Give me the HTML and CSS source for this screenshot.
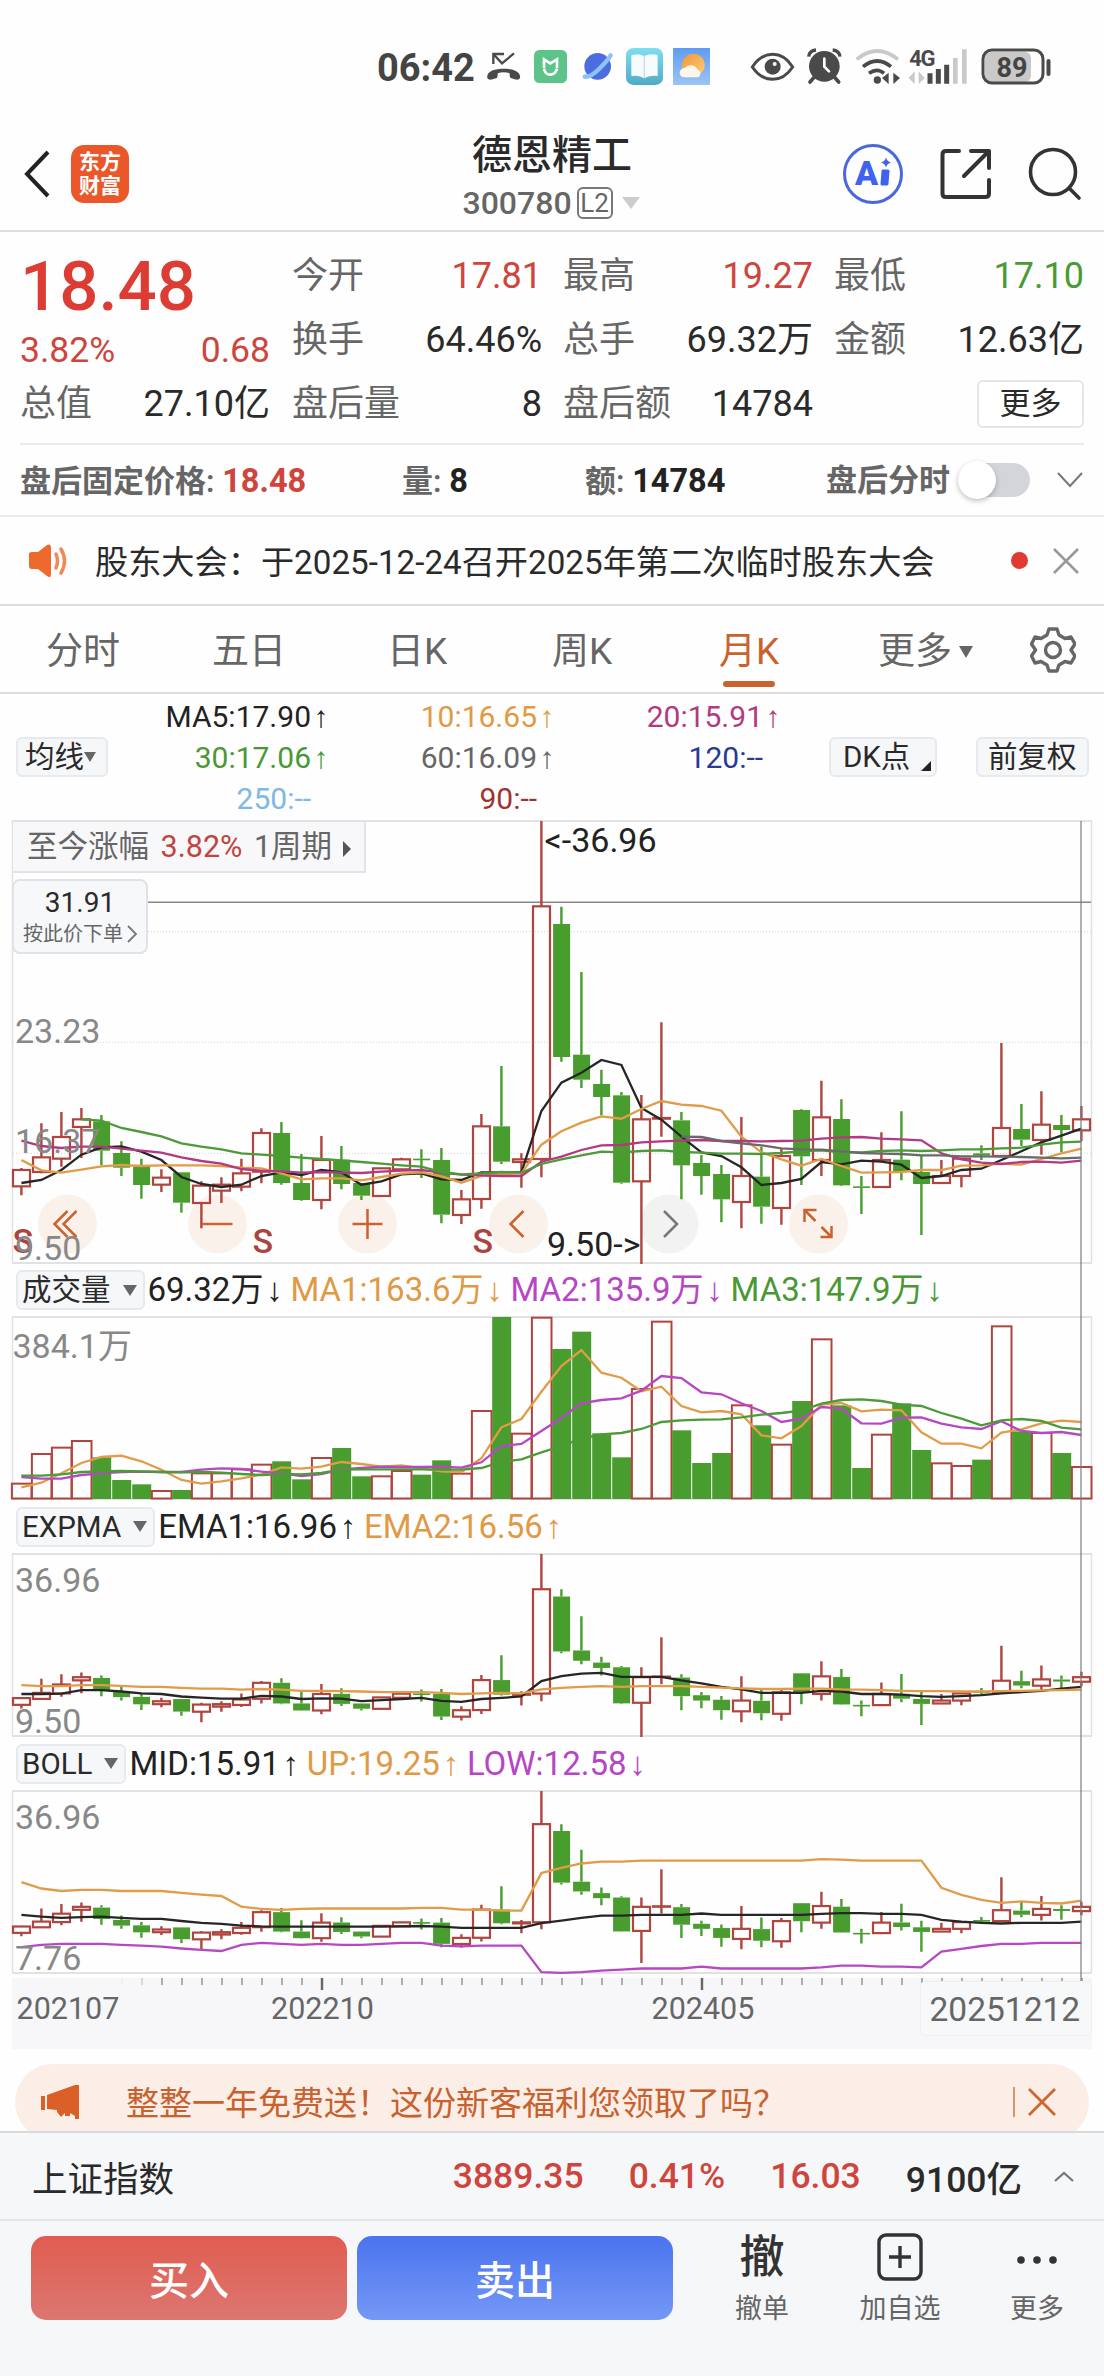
FILE: index.html
```html
<!DOCTYPE html>
<html lang="zh-CN">
<head>
  <meta charset="UTF-8">
  <meta name="viewport" content="width=device-width, initial-scale=1.0">
  <title>德恩精工 300780</title>
  <link rel="stylesheet" href="styles.css">
</head>
<body>
  <!-- 状态栏 -->
  <div class="status-bar">
    <span class="clock">06:42</span>
    <svg class="notify-icons" width="234" height="60" viewBox="0 0 702 180">
      <defs>
        <linearGradient id="book" x1="0" y1="0" x2="0" y2="1"><stop offset="0" stop-color="#7fdff0"/><stop offset="1" stop-color="#4fabc4"/></linearGradient>
        <linearGradient id="sky" x1="0" y1="0" x2="0" y2="1"><stop offset="0" stop-color="#5f9cf0"/><stop offset="1" stop-color="#9cc4f6"/></linearGradient>
        <linearGradient id="sun" x1="0" y1="0" x2="1" y2="1"><stop offset="0" stop-color="#f0963c"/><stop offset="1" stop-color="#fbcf72"/></linearGradient>
      </defs>
      <path d="M40 84V54H72M42 56L66 82L102 52" fill="none" stroke="#4a4a4a" stroke-width="7"/>
      <path d="M22 126C18 106 44 98 71 98S124 106 120 126Q116 134 104 130L92 126Q88 122 89 112Q71 106 53 112Q54 122 50 126L38 130Q26 134 22 126Z" fill="#4a4a4a"/>
      <rect x="162" y="42" width="99" height="99" rx="16" fill="#5cc389"/>
      <path d="M192 96V70L211 82L231 70V96M192 98Q196 116 211 116T231 98" fill="none" stroke="#fff" stroke-width="8"/>
      <circle cx="353" cy="91" r="40" fill="#4b6de0"/>
      <path d="M314 122Q332 124 358 98T392 58" fill="none" stroke="#8fc3f8" stroke-width="13" stroke-linecap="round"/>
      <rect x="438" y="36" width="111" height="111" rx="22" fill="url(#book)"/>
      <path d="M454 58Q476 50 493 60Q510 50 533 58V120Q508 116 493 127Q478 116 454 120Z" fill="#f6fbfd"/>
      <path d="M493 60V127" stroke="#c4dde8" stroke-width="4"/>
      <rect x="579" y="36" width="111" height="111" fill="url(#sky)"/>
      <circle cx="640" cy="87" r="34" fill="url(#sun)"/>
      <path d="M612 124a14 14 0 0 1 2-28a22 20 0 0 1 38 4a13 13 0 0 1 2 24z" fill="#fdf6ea"/>
    </svg>
    <svg class="system-icons" width="225" height="60" viewBox="804 0 675 180">
      <path d="M817 93Q842 55 878 55T938 93Q914 130 878 130T817 93Z" fill="none" stroke="#4a4a4a" stroke-width="9"/>
      <circle cx="878" cy="92" r="24" fill="#4a4a4a"/><circle cx="884" cy="84" r="6" fill="#fff"/>
      <circle cx="1033" cy="91" r="46" fill="#4a4a4a"/>
      <path d="M986 62Q988 44 1008 42M1080 62Q1078 44 1058 42" fill="none" stroke="#4a4a4a" stroke-width="10"/>
      <path d="M1002 124L990 138M1064 124L1076 138" stroke="#4a4a4a" stroke-width="11" stroke-linecap="round"/>
      <path d="M1033 68V92L1047 106" fill="none" stroke="#fff" stroke-width="8" stroke-linecap="round"/>
      <path d="M1130 70Q1192 20 1254 70" fill="none" stroke="#c9c9c9" stroke-width="11"/>
      <path d="M1149 92Q1192 58 1233 92M1167 112Q1192 94 1212 112" fill="none" stroke="#4a4a4a" stroke-width="11"/>
      <circle cx="1192" cy="132" r="11" fill="#4a4a4a"/>
      <path d="M1226 110V144L1206 126ZM1240 110V144L1260 126Z" fill="#4a4a4a"/>
      <text x="1288" y="89" class="net-type">4G</text>
      <path d="M1304 106V144L1286 126ZM1316 106V144L1334 126Z" fill="#c9c9c9"/>
      <path d="M1350 112V143M1375 99V143M1400 86V143" stroke="#4a4a4a" stroke-width="15"/>
      <path d="M1426 66V143M1453 40V143" stroke="#c9c9c9" stroke-width="14"/>
    </svg>
    <svg class="battery" width="72" height="38" viewBox="0 0 72 38">
      <rect x="4" y="4" width="46" height="30" rx="6" fill="#c9c9c9"/>
      <rect x="2" y="2" width="60" height="33" rx="9" fill="none" stroke="#4a4a4a" stroke-width="3"/>
      <path d="M67.5 13V26" stroke="#4a4a4a" stroke-width="4" stroke-linecap="round"/>
      <text x="31" y="28.5" text-anchor="middle" class="battery-num">89</text>
    </svg>
  </div>

  <!-- 标题栏 -->
  <header class="header">
    <svg class="back" width="30" height="50" viewBox="0 0 30 50"><path d="M26 3L5 25L26 47" fill="none" stroke="#222" stroke-width="4"/></svg>
    <div class="logo">东方<br>财富</div>
    <div class="title">
      <h1>德恩精工</h1>
      <div class="code">300780<span class="level">L2</span><i class="tri tri-light"></i></div>
    </div>
    <div class="tools">
      <svg width="62" height="62" viewBox="0 0 62 62">
        <circle cx="31" cy="31" r="28.5" fill="none" stroke="#4a68dc" stroke-width="3"/>
        <text x="13" y="42" class="ai">A</text>
        <path d="M41 28H46L45 41H40Z" fill="#3f63f0" stroke="#3f63f0" stroke-width="3" stroke-linejoin="round"/>
        <path d="M44 14.500Q45 18.500 49 19.500Q45 20.500 44 24.500Q43 20.500 39 19.500Q43 18.500 44 14.500Z" fill="#3f63f0"/>
      </svg>
      <svg width="52" height="52" viewBox="0 0 52 52" fill="none" stroke="#333" stroke-width="4" stroke-linecap="round" stroke-linejoin="round">
        <path d="M19 3H6Q2.500 3 2.500 6.500V45.500Q2.500 49 6 49H45Q49 49 49 45.500V32M31 3H49V20M49 3L24 28"/>
      </svg>
      <svg width="54" height="54" viewBox="0 0 54 54" fill="none" stroke="#333" stroke-width="3.600" stroke-linecap="round">
        <circle cx="25" cy="25" r="22.500"/><path d="M41 41L51 51"/>
      </svg>
    </div>
  </header>

  <!-- 行情 -->
  <section class="quote">
    <div class="quote-main">
      <div class="price">18.48</div>
      <div class="change"><span>3.82%</span><span>0.68</span></div>
      <div class="cell"><label>总值</label><span>27.10亿</span></div>
    </div>
    <div class="quote-grid">
      <div class="cell"><label>今开</label><span class="red">17.81</span></div>
      <div class="cell"><label>最高</label><span class="red">19.27</span></div>
      <div class="cell"><label>最低</label><span class="green">17.10</span></div>
      <div class="cell"><label>换手</label><span>64.46%</span></div>
      <div class="cell"><label>总手</label><span>69.32万</span></div>
      <div class="cell"><label>金额</label><span>12.63亿</span></div>
      <div class="cell"><label>盘后量</label><span>8</span></div>
      <div class="cell"><label>盘后额</label><span>14784</span></div>
      <div class="cell cell-end"><button class="more">更多</button></div>
    </div>
  </section>

  <section class="after">
    <div class="after-price">盘后固定价格: <b class="red">18.48</b></div>
    <div class="after-vol">量: <b>8</b></div>
    <div class="after-amt">额: <b>14784</b></div>
    <div class="after-switch">盘后分时<span class="toggle"></span>
      <svg width="26" height="18" viewBox="0 0 26 18"><path d="M1 2L13 15L25 2" fill="none" stroke="#777" stroke-width="2"/></svg>
    </div>
  </section>

  <section class="news">
    <svg class="horn" width="40" height="34" viewBox="0 0 40 34">
      <path d="M1 10Q1 8 4 8H10L19 1Q23 -1 23 4V30Q23 35 19 32L10 25H4Q1 25 1 22Z" fill="#ee6a2c"/>
      <path d="M28 10Q31 17 28 24M33 5Q40 17 33 29" fill="none" stroke="#ee8a58" stroke-width="3.500" stroke-linecap="round"/>
    </svg>
    <span class="news-text">股东大会：于2025-12-24召开2025年第二次临时股东大会</span>
    <i class="dot"></i>
    <svg width="26" height="26" viewBox="0 0 26 26"><path d="M1 1L25 25M25 1L1 25" stroke="#999" stroke-width="2.600"/></svg>
  </section>

  <nav class="tabs">
    <a>分时</a><a>五日</a><a>日K</a><a>周K</a><a class="active">月K</a><a class="tab-more">更多<i class="tri tri-sm"></i></a>
    <svg class="gear" width="46" height="46" viewBox="0 0 46 46" fill="none" stroke="#666" stroke-width="3.400" stroke-linejoin="round">
      <path d="M19 2H27L29 8L35 11.500L41 10L45 17L41 23L45 29L41 36L35 34.500L29 38L27 44H19L17 38L11 34.500L5 36L1.500 29L5.500 23L1.500 17L5 10L11 11.500L17 8Z"/>
      <circle cx="23" cy="23" r="7.500"/>
    </svg>
  </nav>

  <!-- K线图 -->
  <main class="chart">
    <div class="ma-legend">
      <button class="chip">均线<i class="tri tri-sm"></i></button>
      <div class="ma-grid">
        <span class="c-black">MA5:17.90<i class="arr">↑</i></span>
        <span class="c-orange">10:16.65<i class="arr">↑</i></span>
        <span class="c-pink">20:15.91<i class="arr">↑</i></span>
        <span class="c-green">30:17.06<i class="arr">↑</i></span>
        <span class="c-gray">60:16.09<i class="arr">↑</i></span>
        <span class="c-navy">120:--<i class="arr"></i></span>
        <span class="c-sky">250:--<i class="arr"></i></span>
        <span class="c-dark">90:--<i class="arr"></i></span>
      </div>
      <button class="chip chip-dk">DK点<i class="corner"></i></button>
      <button class="chip chip-fq">前复权</button>
    </div>

    <div class="panel">
      <svg id="kline" width="1104" height="444"></svg>
      <div class="since">至今涨幅 <b>3.82%</b> 1周期<i></i></div>
      <div class="order">
        <strong>31.91</strong>
        <span>按此价下单<svg width="10" height="20" viewBox="0 0 10 20"><path d="M1 2L9 10L1 18" fill="none" stroke="#777" stroke-width="1.800"/></svg></span>
      </div>
    </div>

    <div class="legend legend-vol">
      <button class="chip">成交量<i class="tri"></i></button>
      <span class="c-black">69.32万<i class="arr">↓</i></span>
      <span class="c-orange">MA1:163.6万<i class="arr">↓</i></span>
      <span class="c-purple">MA2:135.9万<i class="arr">↓</i></span>
      <span class="c-green">MA3:147.9万<i class="arr">↓</i></span>
    </div>
    <svg id="volume" width="1104" height="184"></svg>

    <div class="legend">
      <button class="chip">EXPMA<i class="tri"></i></button>
      <span class="c-black">EMA1:16.96<i class="arr">↑</i></span>
      <span class="c-orange">EMA2:16.56<i class="arr">↑</i></span>
    </div>
    <svg id="expma" width="1104" height="184"></svg>

    <div class="legend">
      <button class="chip">BOLL<i class="tri"></i></button>
      <span class="c-black">MID:15.91<i class="arr">↑</i></span>
      <span class="c-orange">UP:19.25<i class="arr">↑</i></span>
      <span class="c-purple">LOW:12.58<i class="arr">↓</i></span>
    </div>
    <svg id="boll" width="1104" height="184"></svg>

    <svg id="axis" width="1104" height="75"></svg>
    <div class="cursor"></div>
  </main>

  <div class="promo-wrap">
    <div class="promo">
      <svg width="40" height="34" viewBox="0 0 40 34" fill="#da6028"><path d="M0 11H4V25H0ZM6 10L34 0H38V34H34V31L29 28V31H24V28L20 32L16 27V25L6 24Z"/></svg>
      <span class="promo-text">整整一年免费送！这份新客福利您领取了吗？</span>
      <i class="bar"></i>
      <svg width="28" height="28" viewBox="0 0 28 28"><path d="M1 1L27 27M27 1L1 27" stroke="#d0652f" stroke-width="2.800"/></svg>
    </div>
  </div>

  <div class="index-bar">
    <span class="index-name">上证指数</span>
    <b class="red">3889.35</b><b class="red">0.41%</b><b class="red">16.03</b><b>9100亿</b>
    <svg width="20" height="11" viewBox="0 0 20 11"><path d="M1 10L10 2L19 10" fill="none" stroke="#777" stroke-width="2.200"/></svg>
  </div>

  <footer class="actions">
    <button class="buy">买入</button>
    <button class="sell">卖出</button>
    <div class="act act-cancel"><span class="glyph">撤</span>撤单</div>
    <div class="act act-add">
      <svg width="46" height="48" viewBox="0 0 46 48" fill="none" stroke="#333" stroke-width="3.400"><rect x="2" y="2" width="42" height="44" rx="7"/><path d="M12 24H34M23 13V35"/></svg>加自选
    </div>
    <div class="act act-more">
      <svg width="46" height="48" viewBox="0 0 46 48" fill="#333"><circle cx="7" cy="27" r="3.800"/><circle cx="23" cy="27" r="3.800"/><circle cx="39" cy="27" r="3.800"/></svg>更多
    </div>
  </footer>

  <script src="chart.js"></script>
</body>
</html>
```

FILE: styles.css
```css
* {
  box-sizing: border-box;
}
body {
  margin: 0;
  width: 1104px;
  height: 2376px;
  overflow: hidden;
  background: #fefefe;
  color: #2a2a2a;
  font-family: Roboto, "Noto Sans CJK SC", sans-serif;
}
svg {
  display: block;
  flex: none;
}
button {
  font-family: inherit;
  color: inherit;
  padding: 0;
  white-space: nowrap;
}
i {
  font-style: normal;
}
.red { color: #cf453d; }
.green { color: #4a9a35; }
.c-black { color: #222; }
.c-orange { color: #e09a45; }
.c-pink { color: #b13a80; }
.c-green { color: #4a9835; }
.c-gray { color: #666; }
.c-navy { color: #283a94; }
.c-sky { color: #80b8e4; }
.c-dark { color: #9c3430; }
.c-purple { color: #b746c6; }

/* 小三角 */
.tri {
  display: inline-block;
  border: 7px solid transparent;
  border-top: 11px solid #666;
  border-bottom: 0;
}
.tri-sm {
  border-width: 10px 6px 0;
}
.tri-light {
  border-width: 12px 9px 0;
  border-top-color: #ccc;
}
.arr {
  display: inline-block;
  width: 20px;
  font-family: "Liberation Sans", sans-serif;
  font-size: 30px;
  text-align: center;
}

/* 状态栏 */
.status-bar {
  display: flex;
  align-items: flex-start;
  height: 112px;
  padding: 36px 0 0 377px;
}
.clock {
  width: 103px;
  font-size: 38px;
  font-weight: 700;
  line-height: 64px;
  color: #444;
}
.system-icons {
  margin-left: 34px;
}
.net-type {
  font-size: 66px;
  font-weight: 700;
  letter-spacing: -4px;
  fill: #4a4a4a;
}
.battery {
  margin: 12px 0 0 8px;
}
.battery-num {
  font-size: 27px;
  font-weight: 700;
  fill: #444;
}

/* 标题栏 */
.header {
  position: relative;
  display: flex;
  align-items: center;
  height: 120px;
  padding: 5px 22px 0 22px;
  border-bottom: 2px solid #ddd;
}
.logo {
  width: 58px;
  height: 58px;
  margin-left: 19px;
  padding-top: 5px;
  border-radius: 13px;
  background: #e9572b;
  color: #fff;
  font-size: 21px;
  font-weight: 700;
  line-height: 24px;
  text-align: center;
}
.title {
  position: absolute;
  left: 0;
  right: 0;
  top: 17px;
  text-align: center;
}
.title h1 {
  margin: 0;
  font-size: 40px;
  font-weight: 500;
  line-height: 54px;
}
.code {
  display: flex;
  align-items: center;
  justify-content: center;
  height: 40px;
  margin-left: -2px;
  font-size: 32px;
  font-weight: 500;
  color: #666;
}
.level {
  width: 36px;
  height: 32px;
  margin: 0 9px 0 5px;
  border: 2px solid #777;
  border-radius: 6px;
  font-size: 26px;
  font-weight: 400;
  line-height: 29px;
}
.tools {
  display: flex;
  align-items: center;
  gap: 36px;
  margin-left: auto;
}
.ai {
  font-size: 34px;
  font-weight: 900;
  fill: #3f63f0;
}

/* 行情 */
.quote {
  display: flex;
  height: 213px;
  margin: 0 20px;
  padding-top: 12px;
  border-bottom: 2px solid #ececec;
  font-size: 36px;
}
.quote-main {
  width: 250px;
  margin-right: 22px;
}
.price {
  height: 86px;
  font-size: 69px;
  font-weight: 500;
  line-height: 86px;
  color: #dc3c34;
}
.change {
  display: flex;
  justify-content: space-between;
  height: 42px;
  line-height: 40px;
  font-size: 35.5px;
  color: #cf453d;
}
.quote-grid {
  display: grid;
  grid-template-columns: repeat(3, 250px);
  grid-auto-rows: 64px;
  column-gap: 21px;
}
.cell {
  display: flex;
  justify-content: space-between;
  align-items: center;
  height: 64px;
  line-height: 64px;
}
.cell label {
  color: #666;
}
.cell-end {
  justify-content: flex-end;
}
.more {
  width: 107px;
  height: 48px;
  border: 2px solid #e6e6e6;
  border-radius: 6px;
  background: #fff;
  font-size: 31px;
  line-height: 42px;
}

.after {
  display: flex;
  height: 72px;
  padding-left: 20px;
  border-bottom: 2px solid #ececec;
  font-size: 31px;
  font-weight: 600;
  line-height: 73px;
  color: #666;
}
.after b {
  font-size: 32.5px;
  font-weight: 700;
  color: #222;
}
.after b.red {
  color: #cf453d;
}
.after-price { width: 382px; }
.after-vol { width: 183px; }
.after-amt { width: 241px; }
.after-switch {
  display: flex;
  align-items: center;
}
.toggle {
  width: 72px;
  height: 34px;
  margin: 0 27px 0 8px;
  border-radius: 17px;
  background: #d3d5db;
}
.toggle::before {
  content: "";
  display: block;
  width: 38px;
  height: 38px;
  margin-top: -2px;
  border-radius: 50%;
  background: #fff;
  box-shadow: 0 2px 5px rgba(0, 0, 0, 0.25);
}

/* 公告 */
.news {
  display: flex;
  align-items: center;
  height: 89px;
  padding: 0 25px 0 28px;
  border-bottom: 2px solid #ddd;
  font-size: 33.2px;
}
.news-text {
  margin: -2px 0 0 27px;
  white-space: nowrap;
}
.dot {
  width: 17px;
  height: 17px;
  margin: 0 25px 0 auto;
  border-radius: 50%;
  background: #e03a32;
}

/* 周期切换 */
.tabs {
  display: flex;
  align-items: center;
  height: 88px;
  padding: 5px 0 0 46px;
  border-bottom: 2px solid #ddd;
  font-size: 37px;
  color: #666;
}
.tabs a {
  position: relative;
  width: 166px;
  line-height: 80px;
}
.tabs a:nth-child(2) { width: 175px; }
.tabs a:nth-child(3) { width: 165px; }
.tabs a:nth-child(4) { width: 167px; }
.tabs a:nth-child(5) { width: 159px; }
.tabs .active {
  color: #c9622f;
}
.tabs .active::after {
  content: "";
  position: absolute;
  left: 4px;
  bottom: 5px;
  width: 52px;
  height: 6px;
  border-radius: 3px;
  background: #c9622f;
}
.tabs .tab-more {
  width: 152px;
}
.tab-more .tri {
  margin-left: 7px;
  border-width: 12px 7px 0;
  vertical-align: 6px;
}
.gear {
  margin-top: -4px;
}

/* 图表 */
.chart {
  position: relative;
}
.chart svg {
  overflow: visible;
}
.ma-legend {
  display: flex;
  align-items: center;
  height: 126px;
  padding-left: 16px;
  font-size: 30px;
}
.chip {
  display: flex;
  align-items: center;
  height: 40px;
  padding: 0 7px;
  border: 2px solid #e6e9ed;
  border-radius: 6px;
  background: #f6f7f9;
  font-size: 29.5px;
  line-height: 36px;
}
.ma-grid {
  display: grid;
  grid-template-columns: 223px 226px 226px;
  grid-auto-rows: 41px;
  line-height: 41px;
  text-align: right;
}
.ma-legend > .chip:first-child {
  width: 92px;
}
.ma-legend .chip-dk {
  position: relative;
  width: 108px;
  margin-left: 46px;
  padding-left: 12px;
}
.ma-legend .chip-fq {
  margin-left: 39px;
  width: 113px;
  padding-left: 10px;
}
.corner {
  position: absolute;
  right: 4px;
  bottom: 4px;
  border-left: 10px solid transparent;
  border-bottom: 10px solid #222;
}
.panel {
  position: relative;
}
.since {
  position: absolute;
  left: 12px;
  top: 2px;
  width: 354px;
  height: 51px;
  padding-left: 14px;
  border: solid #e2e3e6;
  border-width: 0 2px 2px 1px;
  background: #f8f8fa;
  font-size: 30.5px;
  line-height: 49px;
  color: #666;
  white-space: nowrap;
  word-spacing: 4px;
}
.since b {
  font-weight: 400;
  color: #c0453e;
}
.since i {
  display: inline-block;
  margin-left: 11px;
  border: 8px solid transparent;
  border-left-color: #555;
  border-right: 0;
}
.order {
  position: absolute;
  left: 12px;
  top: 59px;
  width: 136px;
  height: 75px;
  padding-top: 5px;
  border: 2px solid #dfe2e6;
  border-radius: 8px;
  background: #f7f8fa;
  text-align: center;
}
.order strong {
  display: block;
  font-size: 28px;
  font-weight: 400;
  line-height: 34px;
}
.order span {
  display: flex;
  align-items: center;
  justify-content: center;
  gap: 4px;
  font-size: 20px;
  line-height: 28px;
  color: #666;
}
.legend {
  display: flex;
  align-items: center;
  height: 53px;
  padding-left: 16px;
  font-size: 33px;
  line-height: 50px;
  white-space: nowrap;
}
.legend-vol {
  height: 52px;
}
.legend .chip {
  height: 40px;
  margin-right: 3px;
  padding: 0 6px 0 4px;
  font-size: 29.5px;
  line-height: 36px;
}
.legend .tri {
  margin-left: 12px;
}
.legend span {
  margin-right: 5px;
}
.legend .arr {
  width: 22px;
  font-size: 33px;
}
.cursor {
  position: absolute;
  left: 1080px;
  top: 127px;
  width: 2px;
  height: 1160px;
  background: rgba(120, 125, 130, 0.6);
}

/* 图内文字 */
.scale {
  font-size: 34px;
  fill: #888;
}
.mark {
  font-size: 34px;
  fill: #222;
}
.sell-mark {
  font-size: 34px;
  font-weight: 500;
  fill: #ab443e;
}
.date {
  font-size: 30.5px;
  fill: #666;
}
.date-now {
  font-size: 33.5px;
  fill: #666;
}

/* 推广条 */
.promo-wrap {
  height: 82px;
  padding: 15px 15px 0;
  overflow: hidden;
}
.promo {
  display: flex;
  align-items: center;
  height: 76px;
  padding: 0 33px 0 26px;
  border-radius: 38px;
  background: #fbeee6;
  color: #c8612e;
  font-size: 33px;
  white-space: nowrap;
}
.promo-text {
  margin: -2px 0 0 45px;
}
.bar {
  width: 2px;
  height: 30px;
  margin: 0 13px 0 auto;
  background: #dc946c;
}

.index-bar {
  display: flex;
  align-items: center;
  height: 90px;
  padding: 0 30px 0 32px;
  border-top: 2px solid #d8dadc;
  border-bottom: 2px solid #e4e6e9;
  background: #f6f7f9;
  font-size: 35.5px;
}
.index-bar b {
  margin-right: 45px;
  font-weight: 500;
}
.index-bar b:nth-of-type(4) {
  margin-right: 32px;
}
.index-name {
  margin-right: auto;
}

/* 底部按钮 */
.actions {
  display: flex;
  height: 155px;
  padding: 15px 0 0 31px;
  background: #f6f7f9;
}
.actions button {
  width: 316px;
  height: 84px;
  margin-right: 10px;
  border: 0;
  border-radius: 15px;
  color: #fff;
  font-size: 40px;
  font-weight: 500;
}
.buy {
  background: linear-gradient(#e05c50, #dc7770);
}
.sell {
  background: linear-gradient(#4a74ee, #7598f6);
}
.act {
  display: flex;
  flex-direction: column;
  align-items: center;
  margin-top: -3px;
  font-size: 27px;
  line-height: 56px;
  color: #666;
  white-space: nowrap;
}
.glyph {
  height: 48px;
  font-size: 45px;
  font-weight: 500;
  line-height: 50px;
  color: #333;
}
.act-cancel {
  width: 80px;
  margin-left: 39px;
}
.act-add {
  width: 100px;
  margin-left: 48px;
}
.act-more {
  width: 80px;
  margin-left: 47px;
}
```

FILE: chart.js
```js
const RED = '#b0453f';
const GREEN = '#489d2e';
const ORANGE = '#e09c48';
const PINK = '#b33a82';
const PURPLE = '#b648c4';
const X0 = 21.4;
const STEP = 20;

// 类型, 最高, 实体上沿, 实体下沿, 最低
const candles = [
  ['r', 1074, 1080, 1129, 1156], ['r', 940, 1042, 1086, 1090], ['r', 906, 981, 1046, 1070],
  ['r', 894, 928, 951, 1044], ['g', 915, 934, 1022, 1066], ['g', 994, 1029, 1073, 1098],
  ['g', 1046, 1071, 1125, 1166], ['r', 1078, 1103, 1124, 1146], ['g', 1087, 1087, 1178, 1208],
  ['r', 1114, 1127, 1179, 1255], ['r', 1102, 1124, 1142, 1179], ['r', 1046, 1090, 1130, 1144],
  ['r', 955, 969, 1085, 1120], ['g', 936, 969, 1119, 1124], ['g', 1032, 1119, 1170, 1172],
  ['r', 978, 1050, 1170, 1198], ['g', 1008, 1049, 1122, 1138], ['g', 1119, 1119, 1157, 1170],
  ['r', 1075, 1075, 1158, 1158], ['r', 1043, 1048, 1078, 1080], ['g', 1018, 1046, 1048, 1104],
  ['g', 1014, 1050, 1214, 1240], ['r', 1140, 1168, 1215, 1242], ['r', 912, 949, 1167, 1196],
  ['g', 768, 949, 1055, 1062], ['r', 1030, 1048, 1056, 1133], ['r', 33, 289, 1047, 1102],
  ['g', 290, 342, 741, 755], ['g', 486, 734, 809, 834], ['g', 779, 822, 861, 916],
  ['g', 846, 856, 1118, 1121], ['r', 855, 928, 1114, 1362], ['r', 637, 924, 926, 980],
  ['g', 906, 931, 1066, 1168], ['g', 1035, 1059, 1098, 1154], ['g', 1065, 1092, 1168, 1237],
  ['r', 921, 1098, 1176, 1255], ['g', 1010, 1100, 1190, 1241], ['r', 1014, 1038, 1194, 1244],
  ['g', 898, 900, 1039, 1125], ['r', 812, 922, 1050, 1098], ['g', 868, 927, 1126, 1128],
  ['g', 1098, 1129, 1132, 1212], ['r', 967, 1050, 1131, 1133], ['g', 904, 1049, 1084, 1111],
  ['g', 1036, 1086, 1122, 1275], ['r', 1050, 1098, 1119, 1120], ['r', 1046, 1046, 1098, 1132],
  ['g', 1006, 1030, 1036, 1050], ['r', 699, 954, 1038, 1040], ['g', 882, 957, 989, 1008],
  ['r', 844, 944, 990, 1034], ['g', 915, 945, 960, 1027], ['r', 888, 928, 961, 993]
];

const ma5 = [1119,1110,1080,1034,1012,1009,1025,1050,1101,1122,1131,1124,1098,1087,1095,1080,1087,1124,1114,1093,1090,1108,1110,1087,1087,1087,903,818,788,750,765,894,929,980,1027,1038,1072,1125,1119,1107,1056,1063,1052,1055,1064,1104,1098,1080,1076,1050,1024,997,977,956];
const ma10 = [1050,1081,1088,1079,1069,1065,1068,1066,1066,1066,1068,1073,1075,1090,1108,1105,1105,1111,1101,1091,1087,1099,1118,1098,1092,1090,1004,964,938,919,926,897,873,884,888,902,980,1027,1048,1067,1047,1068,1088,1087,1086,1080,1080,1067,1066,1061,1064,1047,1030,1016];
const ma20 = [992,1008,1014,1010,1010,1016,1022,1028,1042,1053,1061,1077,1082,1084,1088,1086,1088,1089,1085,1082,1080,1088,1094,1096,1098,1098,1055,1040,1020,1006,1005,997,994,992,990,993,993,994,993,992,986,982,981,986,988,991,1030,1048,1058,1062,1056,1055,1058,1052];
const ma30 = [928,932,954,966,979,1000,1010,1018,1030,1034,1038,1043,1047,1051,1056,1061,1066,1070,1086,1093,1090,1086,1088,1062,1048,1036,1025,1027,1023,1021,1026,1028,1031,1031,1032,1029,1024,1021,1027,1027,1023,1021,1023,1021,1018,1018,1015,1013,1004,997,995];
const ma60 = [980,981,993,1000,1006,1015,1018,1019,1024,1029,1031,1032,1036,1036,1039,1039,1040,1041,1043,1045,1043];

const volumes = [671,582,563,543,592,660,673,693,690,640,640,628,614,604,658,594,564,649,649,633,644,601,641,453,171,521,173,267,215,520,592,387,185,511,609,579,436,496,554,423,238,436,624,524,430,570,610,618,599,199,514,519,579,621];
const vol1 = [682,668,640,609,591,587,604,629,660,671,664,655,644,622,626,620,606,612,620,616,625,634,636,595,502,477,395,318,270,338,353,394,380,438,457,453,463,526,535,498,434,429,454,449,451,517,551,551,565,518,508,490,482,486];
const vol2 = [651,656,656,645,640,636,635,636,636,629,625,627,635,640,648,642,628,624,620,621,621,620,623,607,558,552,513,474,430,420,415,392,348,354,397,403,430,453,486,476,441,446,490,491,473,472,491,502,507,484,513,519,516,525];
const vol3 = [647,647,643,636,634,633,634,636,637,636,638,642,645,642,643,639,629,628,628,628,628,629,629,624,606,598,577,558,536,523,519,507,486,481,479,478,472,464,459,452,431,420,418,423,434,438,459,476,496,481,477,483,503,508];

const ema1 = [543,543,542,532,532,536,541,543,550,553,556,556,548,550,557,555,556,563,560,557,554,562,565,557,554,550,507,493,486,484,495,495,495,505,513,523,530,540,540,540,534,536,543,543,545,549,551,549,546,541,538,534,528,523];
const ema2 = [518,521,521,518,518,520,523,523,526,528,528,531,529,531,534,534,535,536,538,538,538,540,543,541,540,541,530,526,523,521,523,521,521,521,523,525,527,529,529,528,528,530,531,532,534,535,535,536,536,535,534,533,532,531];

const mid = [1162,1167,1170,1168,1167,1170,1173,1173,1179,1184,1187,1192,1194,1195,1195,1195,1195,1195,1195,1194,1193,1195,1198,1198,1198,1198,1185,1178,1170,1164,1164,1162,1162,1162,1158,1162,1162,1162,1162,1162,1159,1157,1157,1159,1159,1162,1176,1181,1184,1186,1184,1184,1184,1181];
const up = [1070,1088,1095,1092,1092,1095,1095,1095,1100,1105,1109,1139,1145,1148,1145,1144,1144,1144,1144,1144,1142,1142,1147,1147,1150,1150,1045,1030,1018,1013,1013,1010,1010,1010,1010,1010,1010,1010,1010,1010,1006,1007,1010,1010,1010,1010,1086,1106,1120,1128,1124,1128,1130,1122];
const low = [1252,1246,1243,1243,1243,1246,1248,1251,1256,1260,1263,1246,1240,1243,1246,1243,1246,1246,1243,1240,1240,1248,1250,1248,1248,1248,1322,1324,1322,1318,1315,1312,1312,1312,1307,1312,1312,1312,1312,1312,1309,1304,1304,1307,1307,1309,1265,1257,1249,1243,1243,1240,1240,1240];

const xAt = i => X0 + i * STEP;

function frame(h) {
  return `<path d="M12.5 1V${h - 1}M1091.5 1V${h - 1}" stroke="#e2e2e2" stroke-width="1.5"/>
    <path d="M12 1H1092M12 ${h - 1}H1092" stroke="#e2e2e2" stroke-width="2"/>`;
}

function line(data, color, y, start = 0) {
  const pts = data.map((v, i) => `${xAt(i + start)},${y(v).toFixed(1)}`).join(' ');
  return `<polyline points="${pts}" fill="none" stroke="${color}" stroke-width="2.3"/>`;
}

function text(x, y, str, cls) {
  return `<text x="${x}" y="${y}" class="${cls}">${str}</text>`;
}

function drawCandles(y) {
  return candles.map(([type, hi, top, bottom, lo], i) => {
    const x = xAt(i);
    const color = type === 'r' ? RED : GREEN;
    const t = y(top), b = y(bottom);
    const wick = `<path d="M${x} ${y(hi)}V${t}M${x} ${b}V${y(lo)}" stroke="${color}" stroke-width="2.4"/>`;
    const body = type === 'r'
      ? `<rect x="${x - 8.4}" y="${t}" width="17" height="${Math.max(b - t, 0.4)}" fill="none" stroke="${color}" stroke-width="2.2"/>`
      : `<rect x="${x - 8.3}" y="${t}" width="17" height="${Math.max(b - t, 1.6)}" fill="${color}"/>`;
    return wick + body;
  }).join('');
}

function drawVolumes() {
  return volumes.map((v, i) => {
    const x = xAt(i), t = (v - 171) / 3 + 1;
    return candles[i][0] === 'r'
      ? `<rect x="${x - 9.5}" y="${t}" width="19.6" height="${182.5 - t}" fill="none" stroke="${RED}" stroke-width="2"/>`
      : `<rect x="${x - 9.2}" y="${t}" width="19" height="${183 - t}" fill="${GREEN}"/>`;
  }).join('');
}

function roundButtons() {
  const icons = [
    [67.5, 'M0 -13L-13 0L0 13M9 -13L-4 0L9 13'],
    [217.5, 'M-15 0H15'],
    [367.5, 'M-15 0H15M0 -15V15'],
    [518.5, 'M5 -13L-8 0L5 13'],
    [669, 'M-5 -13L8 0L-5 13'],
    [818.5, 'M-3 -3L-14 -14M-14 -2V-14H-2M3 3L13 13M13 2V13H2']
  ];
  return icons.map(([x, d], i) => `<g transform="translate(${x} 404)">
    <circle r="29.5" fill="${i === 4 ? '#f2f2f2' : '#fbf1eb'}"/>
    <path d="${d}" fill="none" stroke="${i === 4 ? '#777' : '#cc6230'}" stroke-width="2.5"/></g>`).join('');
}

// 主图
const yMain = v => (v - 33) / 3 + 1;
document.getElementById('kline').innerHTML = frame(444) +
  '<path d="M13 111.700H1091M13 222.300H1091M13 333.300H1091" stroke="#d4d4d4" stroke-dasharray="1 2"/>' +
  '<path d="M146 82.300H1091" stroke="#888" stroke-width="1.600"/>' +
  roundButtons() + drawCandles(yMain) +
  line(ma5, '#262626', yMain) + line(ma10, ORANGE, yMain) + line(ma20, PINK, yMain) +
  line(ma30, '#4c9a38', yMain, 3) + line(ma60, '#6a6a6a', yMain, 33) +
  text(12.500, 433, 'S', 'sell-mark') + text(252.500, 433, 'S', 'sell-mark') + text(472.500, 433, 'S', 'sell-mark') +
  text(15, 222.500, '23.23', 'scale') + text(15, 333, '16.37', 'scale') + text(15, 440, '9.50', 'scale') +
  text(544.500, 31.500, '&lt;-36.96', 'mark') + text(547, 436, '9.50-&gt;', 'mark');

// 成交量
const yVol = v => (v - 171) / 3 + 1;
document.getElementById('volume').innerHTML = frame(184) + drawVolumes() +
  line(vol1, ORANGE, yVol) + line(vol2, PURPLE, yVol) + line(vol3, '#4c9a38', yVol) +
  text(12.500, 42, '384.1万', 'scale');

// EXPMA
const yEma = v => (v - 151) / 2.8 + 1;
document.getElementById('expma').innerHTML = frame(184) +
  drawCandles(v => (v - 33) / 1326 * 182.5 + 1) +
  line(ema1, '#262626', yEma) + line(ema2, ORANGE, yEma) +
  text(15, 39, '36.96', 'scale') + text(15, 179.500, '9.50', 'scale');

// BOLL
const yBoll = v => (v - 815) / 2.8 + 1;
document.getElementById('boll').innerHTML = frame(184) +
  drawCandles(v => (v - 33) / 1326 * 27.46 / 29.2 * 182.5 + 1) +
  line(mid, '#262626', yBoll) + line(up, ORANGE, yBoll) + line(low, PURPLE, yBoll) +
  text(15, 38.500, '36.96', 'scale') + text(15, 179.500, '7.76', 'scale');

// 时间轴
let ticks = '';
for (let i = 5; i < 54; i++) {
  const major = i === 15 || i === 34;
  const fade = i === 5 ? 0.1 : i === 6 ? 0.4 : 1;
  ticks += `<path d="M${xAt(i) + 0.6} 4V${major ? 16 : 11}" stroke="${major ? '#666' : '#999'}" stroke-width="${major ? 2.4 : 1.6}" opacity="${fade}"/>`;
}
document.getElementById('axis').innerHTML =
  '<rect x="12" y="4" width="1080" height="71" fill="#f7f7fa"/>' + ticks +
  '<rect x="920.500" y="7.500" width="171" height="54" rx="5" fill="#f7f8fa" stroke="#eeeff2"/>' +
  text(16.500, 45, '202107', 'date') + text(271, 45, '202210', 'date') + text(651.500, 45, '202405', 'date') +
  text(929.500, 47, '20251212', 'date-now');
```
